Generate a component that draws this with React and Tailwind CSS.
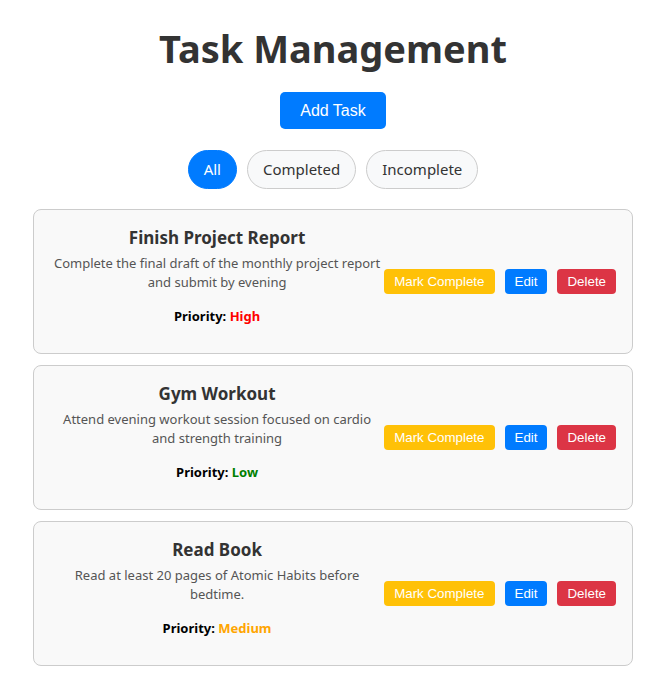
const tasks = [
  {
    id: 1,
    title: "Finish Project Report",
    description: "Complete the final draft of the monthly project report and submit by evening",
    priority: "High",
  },
  {
    id: 2,
    title: "Gym Workout",
    description: "Attend evening workout session focused on cardio and strength training",
    priority: "Low",
  },
  {
    id: 3,
    title: "Read Book",
    description: "Read at least 20 pages of Atomic Habits before bedtime.",
    priority: "Medium",
  },
];

const priorityColor = {
  High: "text-[#ff0000]",
  Low: "text-[#008000]",
  Medium: "text-[#ffa500]",
};

const TaskCard = ({ task }) => {
  return (
    <div className="flex items-center rounded-lg border border-[#cccccc] bg-[#f9f9f9] px-4 py-4">
      <div className="flex-1 text-center">
        <h3 className="text-[17px] font-bold leading-[24px] text-[#333333]">{task.title}</h3>
        <p className="mt-[4px] text-[13px] leading-[19px] text-[#555555]">{task.description}</p>
        <p className="mb-[11px] mt-[14px] text-[13px] font-bold leading-[20px] text-black">
          Priority: <span className={priorityColor[task.priority]}>{task.priority}</span>
        </p>
      </div>
      <div className="flex gap-[10px] font-['Liberation_Sans',Arial,sans-serif] text-[13.333px] leading-[15px] text-white">
        <button className="rounded bg-[#ffc107] px-[10px] py-[5px]">Mark Complete</button>
        <button className="rounded bg-[#007bff] px-[10px] py-[5px]">Edit</button>
        <button className="rounded bg-[#dc3545] px-[10px] py-[5px]">Delete</button>
      </div>
    </div>
  );
};

export default function App() {
  const filters = ["All", "Completed", "Incomplete"];
  const active = "All";

  return (
    <div className="min-h-screen bg-white pl-[33px] pr-[21px] pt-[23px] pb-6 font-['Noto_Sans',sans-serif]">
      <h1 className="text-center text-[38px] font-bold leading-[50px] text-[#333333]">Task Management</h1>

      <div className="mt-[19px] flex justify-center">
        <button className="rounded-[5px] bg-[#007bff] px-5 py-[10px] font-['Liberation_Sans',Arial,sans-serif] text-[16px] leading-[17px] text-white">
          Add Task
        </button>
      </div>

      <div className="mt-[21px] flex justify-center gap-[10px]">
        {filters.map((f) => (
          <button
            key={f}
            className={
              f === active
                ? "rounded-full border border-[#007bff] bg-[#007bff] px-[15px] py-2 text-[15px] leading-[21px] text-white"
                : "rounded-full border border-[#cccccc] bg-[#f8f9fa] px-[15px] py-2 text-[15px] leading-[21px] text-[#333333]"
            }
          >
            {f}
          </button>
        ))}
      </div>

      <div className="mt-[20px] flex flex-col gap-[11px]">
        {tasks.map((t) => (
          <TaskCard key={t.id} task={t} />
        ))}
      </div>
    </div>
  );
}
